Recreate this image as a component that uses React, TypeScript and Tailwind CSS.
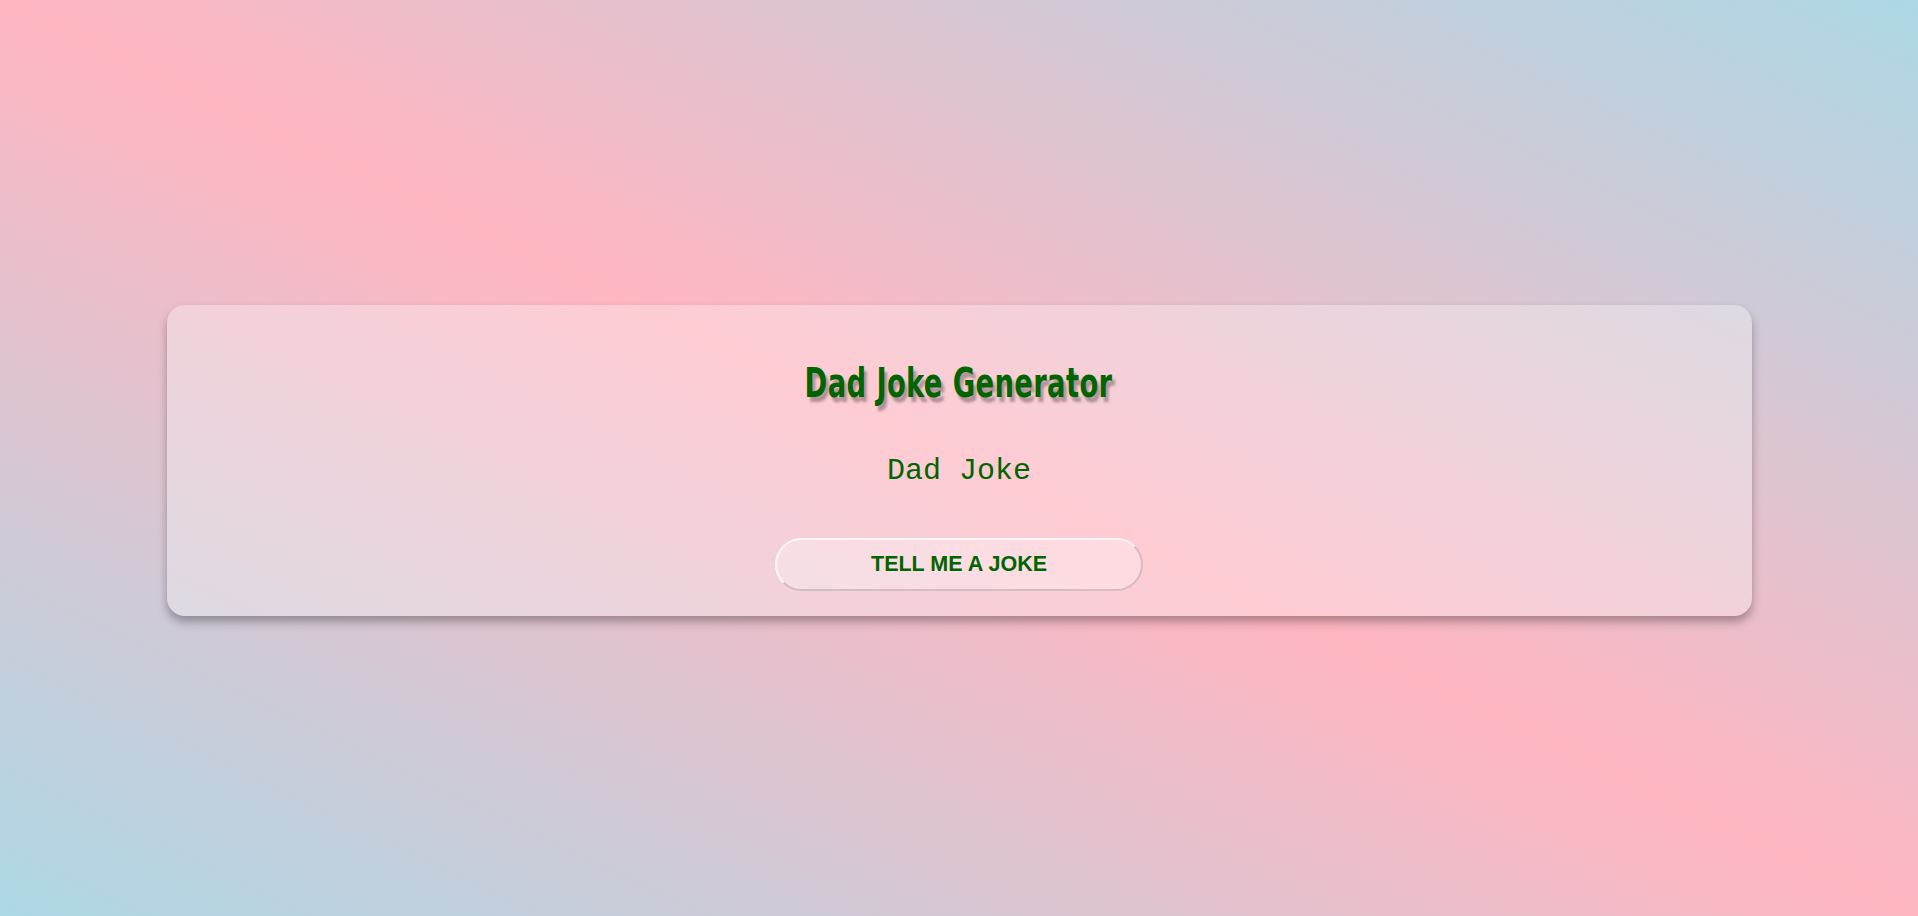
export default function App() {
  return (
    <div className="flex h-[916px] w-full items-center justify-center bg-[linear-gradient(to_top_right,#add8e6,#ffb6c1,#add8e6)] font-['Liberation_Sans',sans-serif]">
      <div className="mt-[5px] flex w-[1585px] flex-col items-center rounded-[18px] bg-white/30 px-8 pb-[25px] pt-[53px] shadow-[0_6px_10px_rgba(0,0,0,0.3)]">
        <h1 className="inline-block scale-x-[0.76] font-['DejaVu_Sans_Condensed','DejaVu_Sans',sans-serif] text-[40px] font-bold leading-[50px] tracking-[0.5px] text-[#006400] [text-shadow:4px_5px_3px_rgba(0,0,0,0.3)]">
          Dad Joke Generator
        </h1>
        <p className="mt-[43px] font-['Courier_New','Liberation_Mono',monospace] text-[30px] leading-[40px] text-[#006400]">
          Dad Joke
        </p>
        <button className="mt-[47px] h-[53px] w-[368px] rounded-full border-2 border-t-white/70 border-l-white/70 border-b-black/15 border-r-black/15 bg-white/30 text-[21.5px] font-bold text-[#006400]">
          TELL ME A JOKE
        </button>
      </div>
    </div>
  );
}
